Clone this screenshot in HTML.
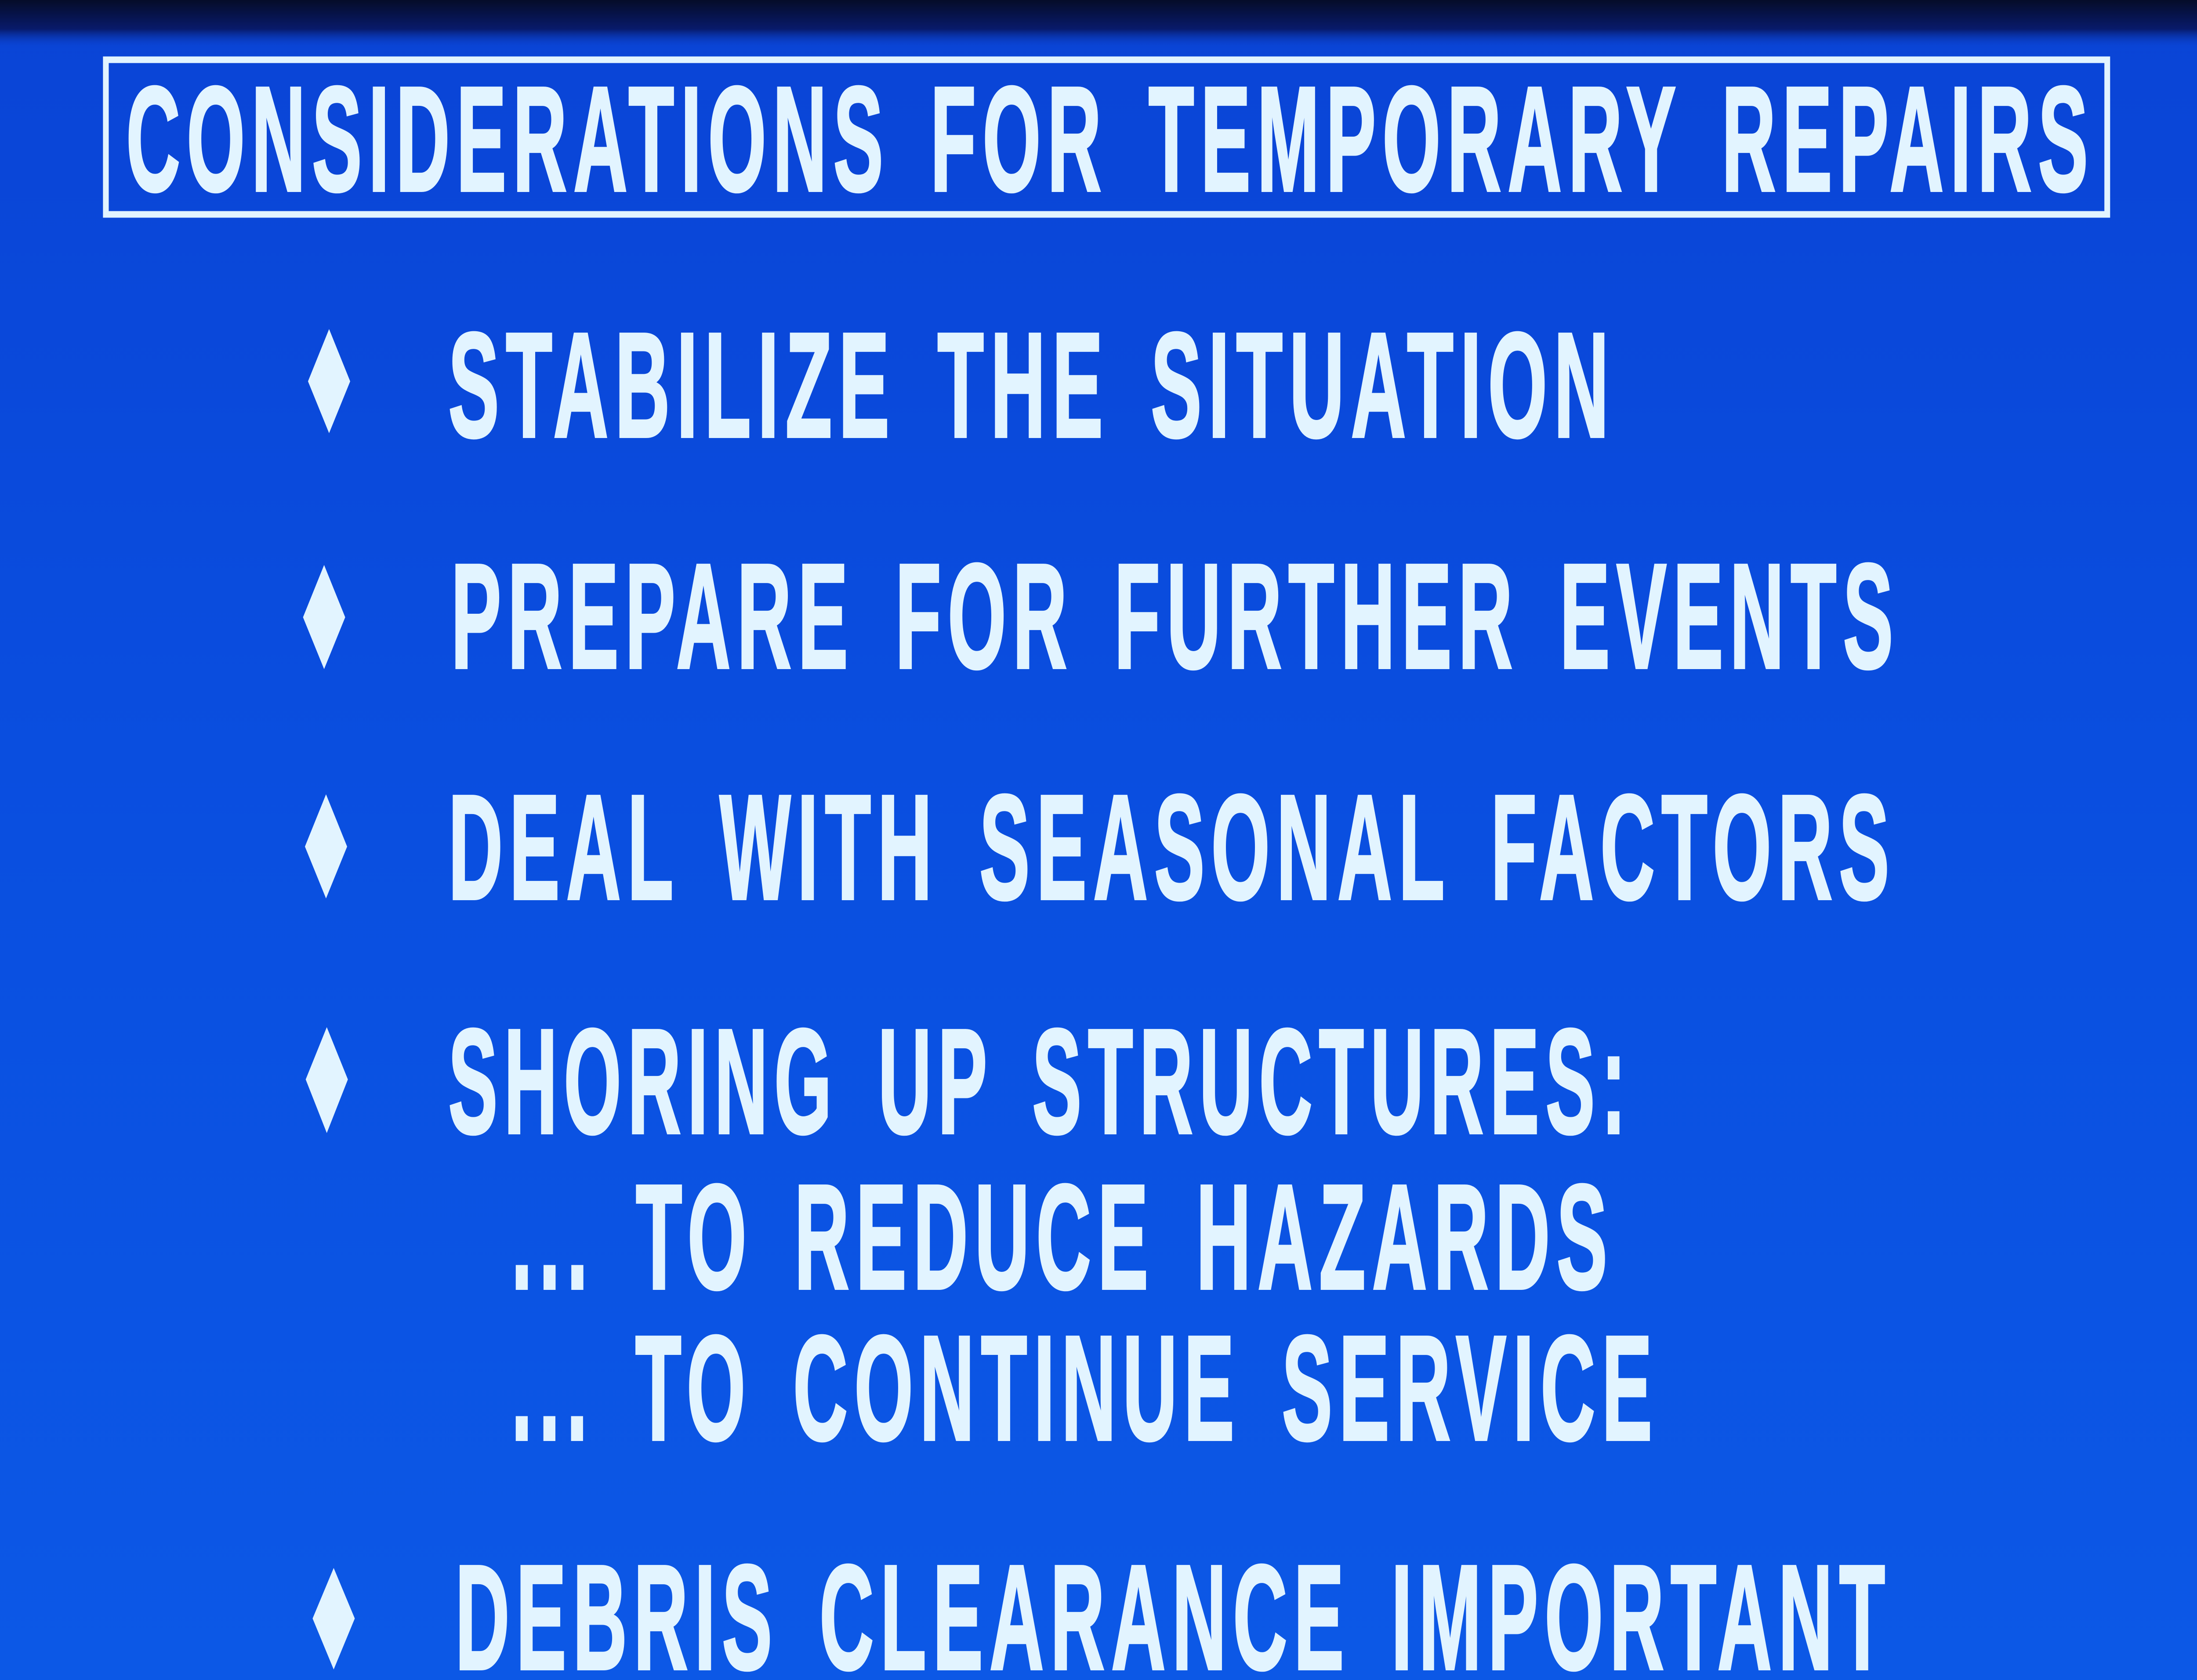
<!DOCTYPE html>
<html><head><meta charset="utf-8"><style>
html,body{margin:0;padding:0;width:100%;height:100%;overflow:hidden;background:#0b4bd8}
svg{display:block;position:absolute;left:0;top:0;width:100vw;height:100vh}
text{font-family:"Liberation Sans",sans-serif;font-weight:bold;fill:#e2f4ff;stroke:#e2f4ff;stroke-width:6px;font-size:340px;letter-spacing:30px;word-spacing:60px}
</style></head><body>
<svg viewBox="0 0 5728 3824" preserveAspectRatio="none" xmlns="http://www.w3.org/2000/svg">
<defs>
<linearGradient id="bg" x1="0" y1="0" x2="0" y2="1">
<stop offset="0" stop-color="#0a44d6"/><stop offset="0.5" stop-color="#0a4fe0"/><stop offset="1" stop-color="#0c58e6"/>
</linearGradient>
<linearGradient id="top" x1="0" y1="0" x2="0" y2="1">
<stop offset="0" stop-color="#050c28"/><stop offset="0.6" stop-color="#081a6a"/><stop offset="1" stop-color="#0a43d2" stop-opacity="0"/>
</linearGradient>
</defs>
<rect width="5728" height="3824" fill="url(#bg)"/>
<rect width="5728" height="110" fill="url(#top)"/>
<rect x="276" y="136" width="5218" height="352" fill="none" stroke="#e2f4ff" stroke-width="15"/>
<text x="329" y="434" textLength="5132" lengthAdjust="spacingAndGlyphs">CONSIDERATIONS FOR TEMPORARY REPAIRS</text>
<g fill="#e2f4ff">
<polygon points="858,749 913,868 858,986 803,868"/>
<polygon points="845,1286 900,1405 845,1523 790,1405"/>
<polygon points="850,1808 905,1927 850,2045 795,1927"/>
<polygon points="852,2338 907,2457 852,2579 797,2457"/>
<polygon points="870,3569 925,3684 870,3800 815,3684"/>
</g>
<text x="1169" y="994" textLength="3043" lengthAdjust="spacingAndGlyphs">STABILIZE THE SITUATION</text>
<text x="1176" y="1520" textLength="3777" lengthAdjust="spacingAndGlyphs">PREPARE FOR FURTHER EVENTS</text>
<text x="1169" y="2046" textLength="3774" lengthAdjust="spacingAndGlyphs">DEAL WITH SEASONAL FACTORS</text>
<text x="1169" y="2579" textLength="3087" lengthAdjust="spacingAndGlyphs">SHORING UP STRUCTURES:</text>
<text x="1333" y="2933" textLength="2875" lengthAdjust="spacingAndGlyphs">... TO REDUCE HAZARDS</text>
<text x="1333" y="3277" textLength="2992" lengthAdjust="spacingAndGlyphs">... TO CONTINUE SERVICE</text>
<text x="1187" y="3799" textLength="3745" lengthAdjust="spacingAndGlyphs">DEBRIS CLEARANCE IMPORTANT</text>
</svg>
</body></html>
